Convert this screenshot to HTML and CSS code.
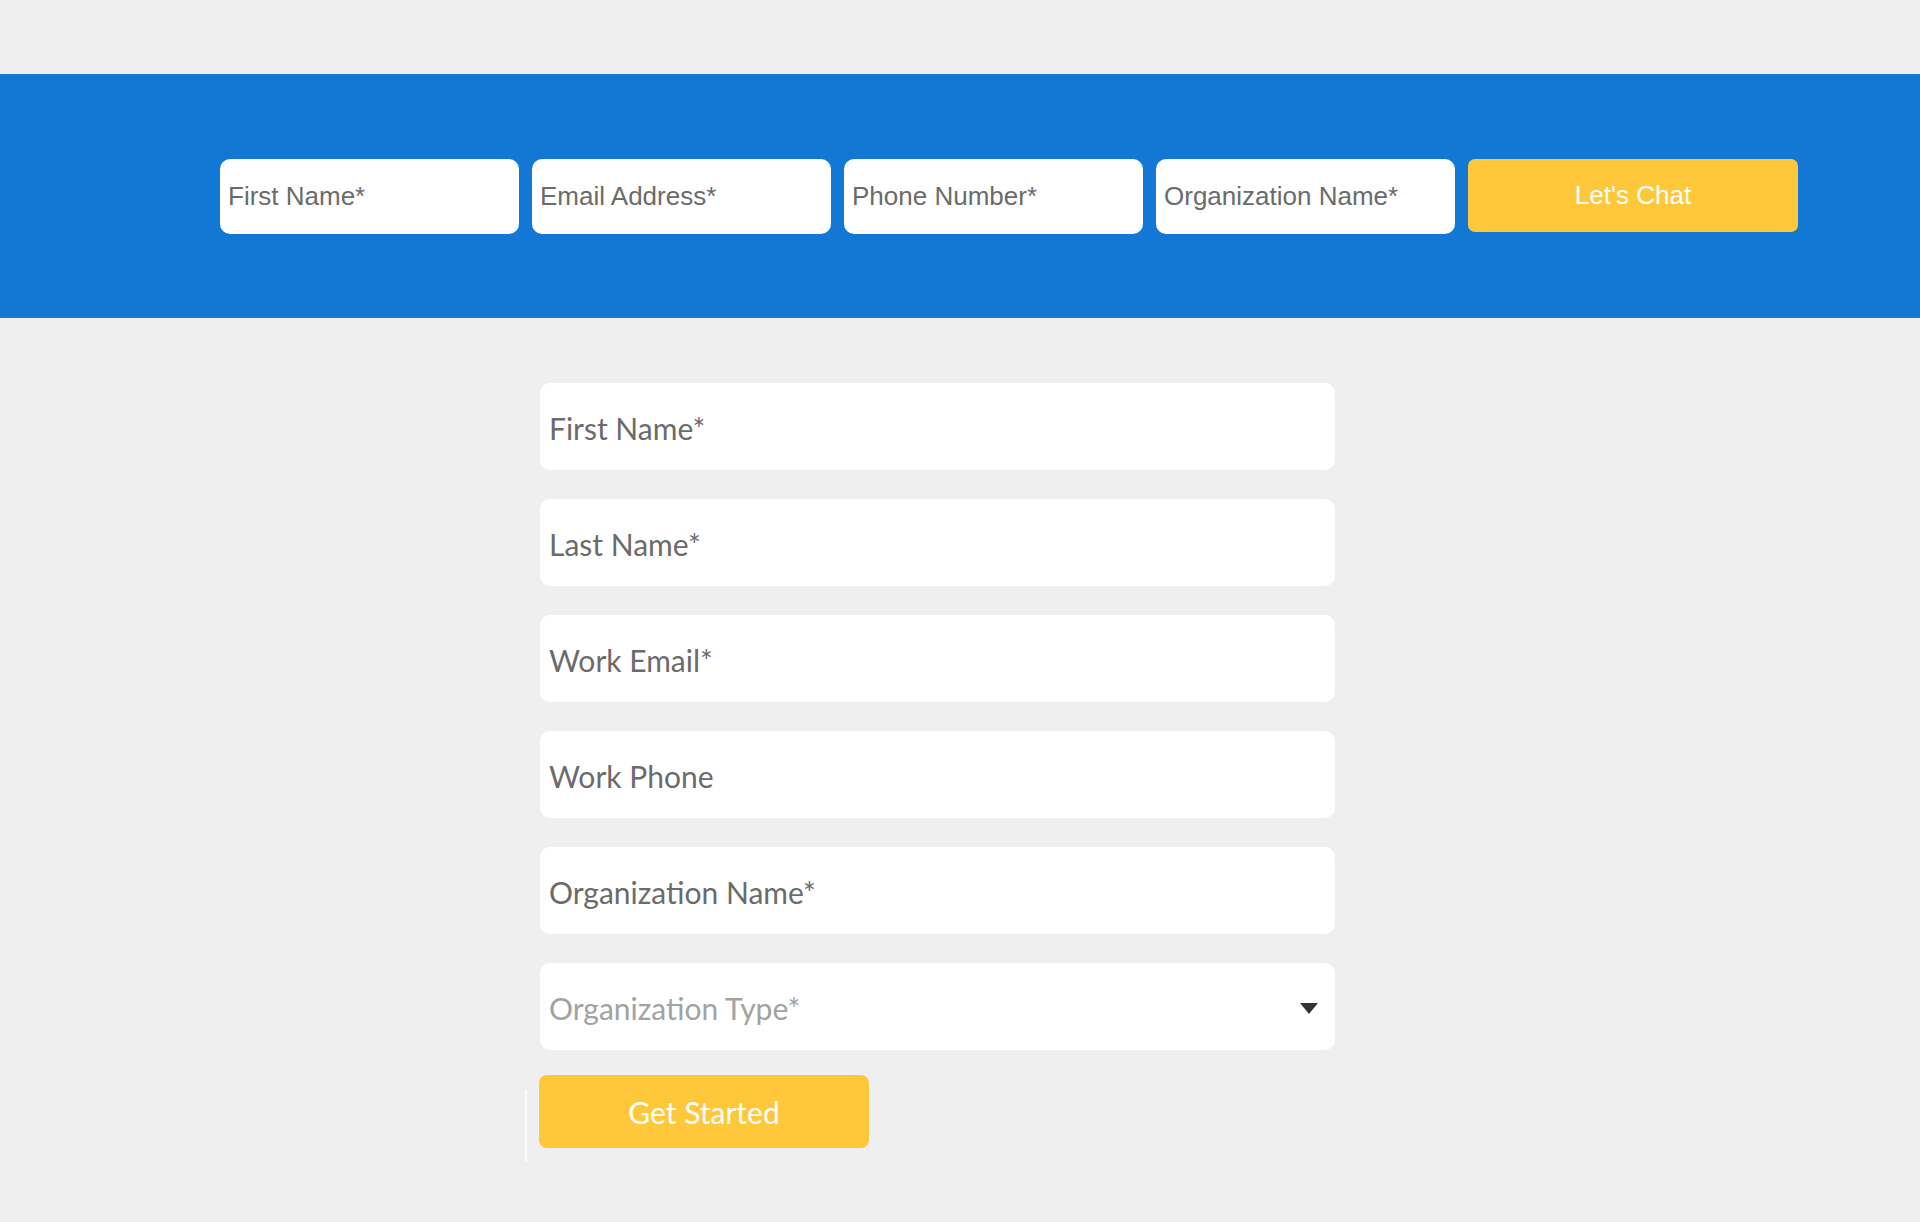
FILE: index.html
```html
<!DOCTYPE html>
<html lang="en">
<head>
<meta charset="utf-8">
<title>Contact forms</title>
<link rel="stylesheet" href="styles.css">
</head>
<body>
  <section class="band">
    <form class="quick">
      <input class="quick-input" type="text" placeholder="First Name*">
      <input class="quick-input" type="text" placeholder="Email Address*">
      <input class="quick-input" type="text" placeholder="Phone Number*">
      <input class="quick-input" type="text" placeholder="Organization Name*">
      <button class="quick-btn" type="button">Let's Chat</button>
    </form>
  </section>
  <section class="main">
    <form class="signup">
      <input class="field" type="text" placeholder="First Name*">
      <input class="field" type="text" placeholder="Last Name*">
      <input class="field" type="text" placeholder="Work Email*">
      <input class="field" type="text" placeholder="Work Phone">
      <input class="field" type="text" placeholder="Organization Name*">
      <div class="field select">
        <span class="select-label">Organization Type*</span>
        <svg class="caret" width="18" height="11" viewBox="0 0 18 11"><path d="M0 0H18L9 11Z" fill="#333"/></svg>
      </div>
      <div class="submit-row">
        <span class="divider"></span>
        <button class="start-btn" type="button">Get Started</button>
      </div>
    </form>
  </section>
</body>
</html>
```
FILE: styles.css
```css
html, body {
  margin: 0;
  padding: 0;
  background: #efefef;
}
body {
  padding-top: 74px;
  min-height: 1222px;
  box-sizing: border-box;
}
.band {
  background: #1277d5;
  height: 244px;
  display: flex;
  align-items: center;
  padding-left: 220px;
  box-sizing: border-box;
}
.quick {
  display: flex;
  align-items: flex-start;
  gap: 13px;
}
.quick-input {
  width: 299px;
  height: 75px;
  box-sizing: border-box;
  border: none;
  border-radius: 10px;
  background: #fff;
  padding: 0 0 0 8px;
  font-family: "Liberation Sans", Arial, sans-serif;
  font-size: 26px;
  color: #6b6b6b;
  outline: none;
}
.quick-input::placeholder {
  color: #6b6b6b;
  opacity: 1;
}
.quick-btn {
  width: 330px;
  height: 73px;
  border: none;
  border-radius: 7px;
  background: #ffc83b;
  color: #fff;
  font-family: "Liberation Sans", Arial, sans-serif;
  font-size: 26px;
  padding: 0;
}
.main {
  padding: 65px 0 0 525px;
}
.signup {
  display: flex;
  flex-direction: column;
  gap: 29px;
  width: 810px;
}
.field {
  width: 795px;
  height: 87px;
  margin-left: 15px;
  box-sizing: border-box;
  border: none;
  border-radius: 10px;
  background: #fff;
  padding: 2px 0 0 9px;
  font-family: Lato, "Liberation Sans", sans-serif;
  font-size: 30px;
  color: #6b6b6b;
  outline: none;
}
.field::placeholder {
  color: #6b6b6b;
  opacity: 1;
}
.select {
  display: flex;
  align-items: center;
  justify-content: space-between;
  padding-right: 17px;
}
.select-label {
  color: #a2a2a2;
}
.caret {
  display: block;
  margin-top: 2px;
}
.submit-row {
  display: flex;
  align-items: flex-start;
  margin-top: -4px;
}
.divider {
  width: 2px;
  height: 72px;
  background: #fbfbfb;
  margin-top: 15px;
  margin-right: 12px;
}
.start-btn {
  width: 330px;
  height: 73px;
  border: none;
  border-radius: 8px;
  background: #ffc83b;
  color: #fff;
  font-family: Lato, "Liberation Sans", sans-serif;
  font-size: 30px;
  padding: 0;
}
```
